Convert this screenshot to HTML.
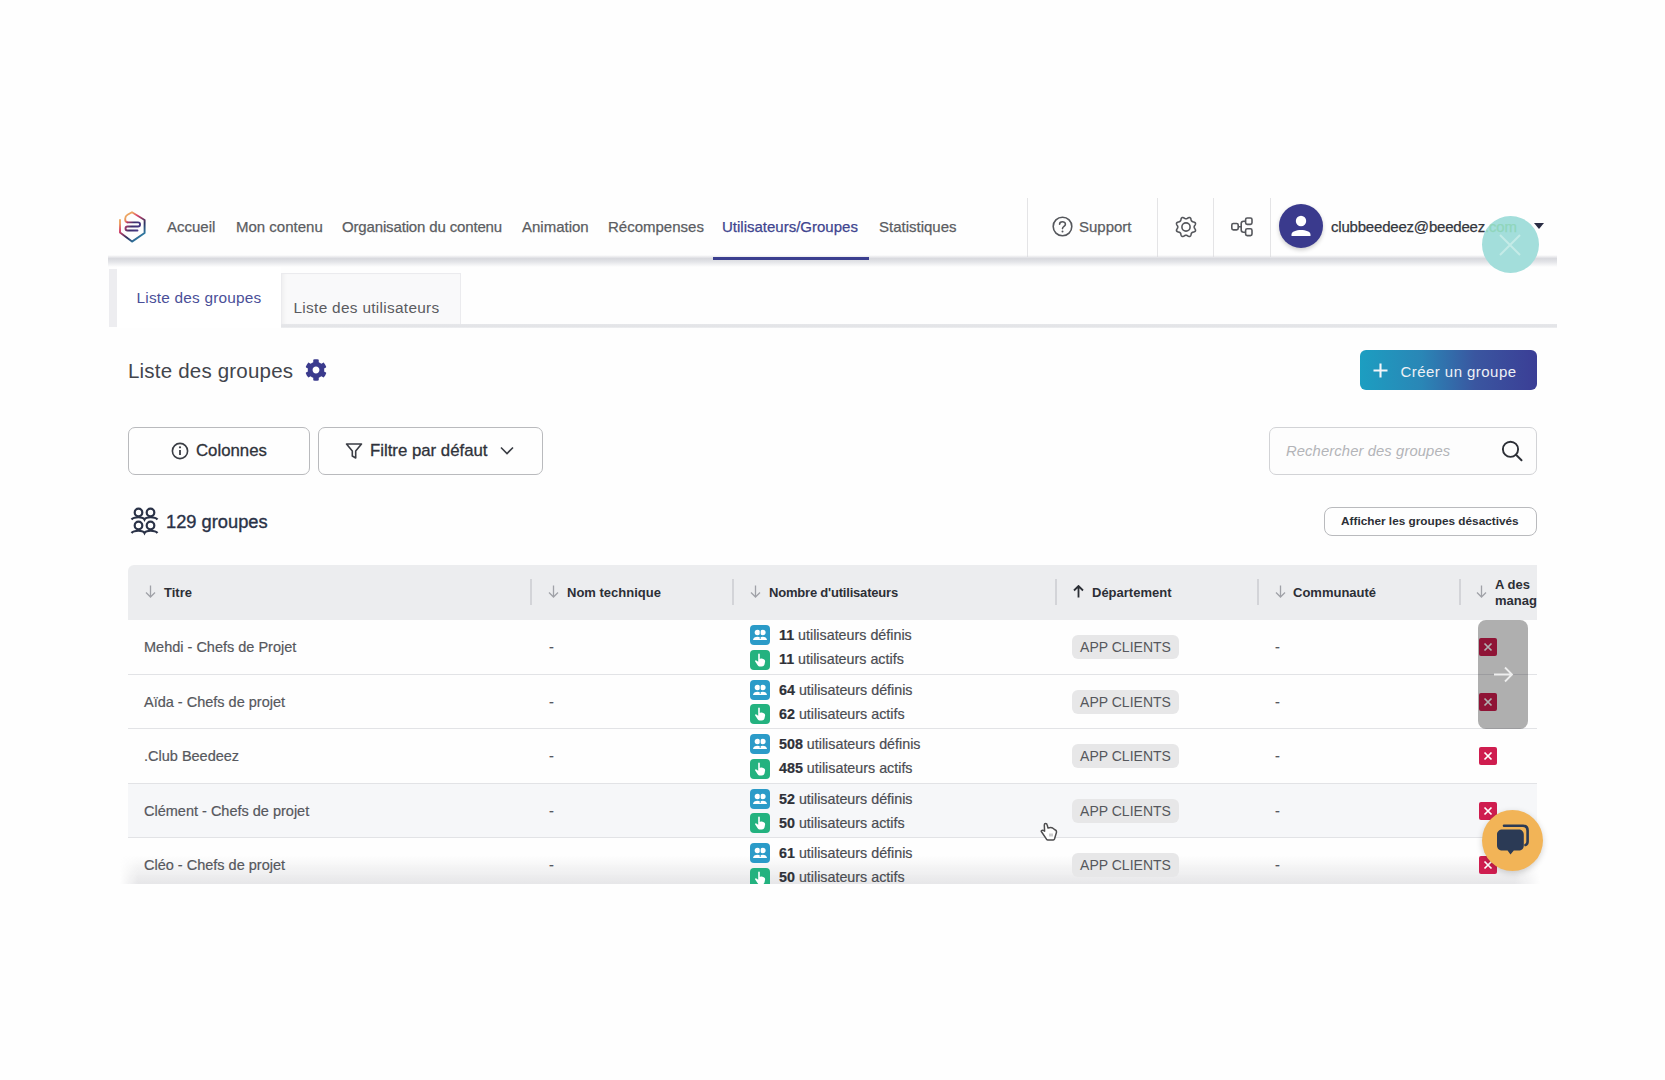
<!DOCTYPE html>
<html><head><meta charset="utf-8">
<style>
*{box-sizing:border-box;margin:0;padding:0}
html,body{width:1665px;height:1080px;overflow:hidden;background:#fefefe;font-family:"Liberation Sans",sans-serif;color:#333}
.a{position:absolute;white-space:nowrap}
.nav{font-size:15px;color:#5b5d62;top:217.5px;line-height:17px;-webkit-text-stroke:0.25px currentColor}
.sep{position:absolute;width:1px;background:#e4e4e6;top:198px;height:59px}
.hdr{position:absolute;font-size:13px;font-weight:bold;color:#2c2f36;line-height:15px}
.arr{position:absolute;color:#9a9ca3;font-size:14px}
.vsep{position:absolute;width:1.5px;background:#d3d4d8;top:579px;height:26px}
.row{position:absolute;left:128px;width:1409px;height:55px;border-top:1px solid #e2e3e6}
.t{position:absolute;font-size:14.5px;color:#56585d;line-height:16px;-webkit-text-stroke:0.2px currentColor}
.ic{position:absolute;width:20px;height:20px;border-radius:4px}
.blue{background:#2b9bc8}
.green{background:#23b27f}
.cnt{position:absolute;font-size:14.3px;color:#4a4c52;line-height:16px;-webkit-text-stroke:0.2px currentColor}
.cnt b{color:#2e3138}
.pill{position:absolute;left:1072px;width:107px;height:24px;border-radius:6px;background:#e7e7e8;color:#55575c;font-size:14px;line-height:24px;text-align:center}
.rx{position:absolute;left:1479px;width:18px;height:18px;border-radius:2px;background:#cf1d4f}
</style></head><body>

<!-- header -->
<svg class="a" style="left:112px;top:204px" width="40" height="44" viewBox="0 0 40 44">
<defs><linearGradient id="lg" gradientUnits="userSpaceOnUse" x1="8" y1="8" x2="33" y2="38"><stop offset="0" stop-color="#f0b45e"/><stop offset="0.22" stop-color="#eba060"/><stop offset="0.36" stop-color="#d8416a"/><stop offset="0.62" stop-color="#2f3260"/><stop offset="1" stop-color="#2fb8da"/></linearGradient>
<linearGradient id="lg2" gradientUnits="userSpaceOnUse" x1="13" y1="18" x2="27" y2="26"><stop offset="0" stop-color="#d83d68"/><stop offset="0.5" stop-color="#3a2f6a"/><stop offset="1" stop-color="#4a3a8a"/></linearGradient></defs>
<path d="M8 16 V28.5 L20 37.6 L32.6 29 V16 L20 8.2 L15.5 10.8 C12.5 12.5 12.2 17.8 15.5 18.4" fill="none" stroke="url(#lg)" stroke-width="1.9" stroke-linejoin="round" stroke-linecap="round"/>
<path d="M15.5 18.4 H26 A2.05 2.05 0 0 1 26 22.5 H15.5 A2 2 0 0 0 15.5 26.5 H25.5" fill="none" stroke="url(#lg2)" stroke-width="1.9" stroke-linecap="round"/>
</svg>
<div class="a nav" style="left:167px">Accueil</div>
<div class="a nav" style="left:236px">Mon contenu</div>
<div class="a nav" style="left:342px;letter-spacing:-0.15px">Organisation du contenu</div>
<div class="a nav" style="left:522px">Animation</div>
<div class="a nav" style="left:608px">Récompenses</div>
<div class="a nav" style="left:722px;color:#40458f">Utilisateurs/Groupes</div>
<div class="a nav" style="left:879px">Statistiques</div>


<div class="sep" style="left:1027px"></div>
<div class="sep" style="left:1157px"></div>
<div class="sep" style="left:1213px"></div>
<div class="sep" style="left:1270px"></div>

<svg class="a" style="left:1052px;top:216px" width="21" height="21" viewBox="0 0 21 21"><circle cx="10.5" cy="10.5" r="9.3" fill="none" stroke="#55575c" stroke-width="1.6"/><path d="M7.6 8.2 C7.6 5 13.4 5 13.4 8.2 C13.4 10.3 10.5 10.4 10.5 12.6" fill="none" stroke="#55575c" stroke-width="1.6" stroke-linecap="round"/><circle cx="10.5" cy="15.5" r="1" fill="#55575c"/></svg>
<div class="a nav" style="left:1079px">Support</div>

<svg class="a" style="left:1173.5px;top:214.5px" width="24" height="24" viewBox="0 0 24 24"><path d="M20.20 12.00 L20.23 12.43 L20.38 12.88 L20.65 13.37 L20.98 13.91 L21.29 14.49 L21.48 15.08 L21.50 15.65 L21.29 16.14 L20.89 16.53 L20.33 16.81 L19.70 17.00 L19.09 17.15 L18.55 17.31 L18.13 17.52 L17.80 17.80 L17.52 18.13 L17.31 18.55 L17.15 19.09 L17.00 19.70 L16.81 20.33 L16.53 20.89 L16.14 21.29 L15.65 21.50 L15.08 21.48 L14.49 21.29 L13.91 20.98 L13.37 20.65 L12.88 20.38 L12.43 20.23 L12.00 20.20 L11.57 20.23 L11.12 20.38 L10.63 20.65 L10.09 20.98 L9.51 21.29 L8.92 21.48 L8.35 21.50 L7.86 21.29 L7.47 20.89 L7.19 20.33 L7.00 19.70 L6.85 19.09 L6.69 18.55 L6.48 18.13 L6.20 17.80 L5.87 17.52 L5.45 17.31 L4.91 17.15 L4.30 17.00 L3.67 16.81 L3.11 16.53 L2.71 16.14 L2.50 15.65 L2.52 15.08 L2.71 14.49 L3.02 13.91 L3.35 13.37 L3.62 12.88 L3.77 12.43 L3.80 12.00 L3.77 11.57 L3.62 11.12 L3.35 10.63 L3.02 10.09 L2.71 9.51 L2.52 8.92 L2.50 8.35 L2.71 7.86 L3.11 7.47 L3.67 7.19 L4.30 7.00 L4.91 6.85 L5.45 6.69 L5.87 6.48 L6.20 6.20 L6.48 5.87 L6.69 5.45 L6.85 4.91 L7.00 4.30 L7.19 3.67 L7.47 3.11 L7.86 2.71 L8.35 2.50 L8.92 2.52 L9.51 2.71 L10.09 3.02 L10.63 3.35 L11.12 3.62 L11.57 3.77 L12.00 3.80 L12.43 3.77 L12.88 3.62 L13.37 3.35 L13.91 3.02 L14.49 2.71 L15.08 2.52 L15.65 2.50 L16.14 2.71 L16.53 3.11 L16.81 3.67 L17.00 4.30 L17.15 4.91 L17.31 5.45 L17.52 5.87 L17.80 6.20 L18.13 6.48 L18.55 6.69 L19.09 6.85 L19.70 7.00 L20.33 7.19 L20.89 7.47 L21.29 7.86 L21.50 8.35 L21.48 8.92 L21.29 9.51 L20.98 10.09 L20.65 10.63 L20.38 11.12 L20.23 11.57 L20.20 12.00Z" fill="none" stroke="#55575c" stroke-width="1.6" stroke-linejoin="round"/><circle cx="12" cy="12" r="4.1" fill="none" stroke="#55575c" stroke-width="1.6"/></svg>

<svg class="a" style="left:1230px;top:216px" width="24" height="21" viewBox="0 0 24 21"><rect x="1.8" y="7.5" width="6.4" height="6.4" rx="1.6" fill="none" stroke="#55575c" stroke-width="1.6"/><rect x="15.6" y="2" width="6.4" height="6.4" rx="1.6" fill="none" stroke="#55575c" stroke-width="1.6"/><rect x="15.6" y="12.8" width="6.4" height="6.8" rx="1.6" fill="none" stroke="#55575c" stroke-width="1.6"/><path d="M8.2 10.7 H11.2 M15.6 5.2 H13.6 C12 5.2 11.2 6 11.2 7.6 V13.8 C11.2 15.4 12 16.2 13.6 16.2 H15.6" fill="none" stroke="#55575c" stroke-width="1.6"/></svg>

<div class="a" style="left:1279px;top:204px;width:44px;height:44px;border-radius:50%;background:#3a3a8d;box-shadow:0 2px 4px rgba(0,0,0,.2)"></div>
<svg class="a" style="left:1288px;top:214px" width="26" height="24" viewBox="0 0 26 24"><circle cx="13" cy="7" r="5.2" fill="#fff"/><path d="M3.5 20.5 C3.5 14.5 22.5 14.5 22.5 20.5 L22.5 22 L3.5 22 Z" fill="#fff"/></svg>
<div class="a nav" style="left:1331px;color:#33363d;letter-spacing:-0.2px;z-index:2">clubbeedeez@beedeez<span style="color:#90d6bb">.com</span></div>
<svg class="a" style="left:1534px;top:223px" width="10" height="7" viewBox="0 0 10 7"><path d="M0 0 H10 L5 6 Z" fill="#2a2d44"/></svg>

<!-- header shadow -->
<div class="a" style="left:108px;top:254.5px;width:1449px;height:12px;background:linear-gradient(rgba(220,221,226,0),#d8d9de 30%,#e2e3e7 55%,rgba(240,240,243,0))"></div>
<div class="a" style="left:713px;top:256.5px;width:156px;height:3px;background:#3b3f8f"></div>

<!-- teal close bubble -->
<div class="a" style="left:1482px;top:216px;width:57px;height:57px;border-radius:50%;background:#a3dedb"></div>
<svg class="a" style="left:1497px;top:232px" width="26" height="26" viewBox="0 0 26 26"><path d="M3 3 L23 23 M23 3 L3 23" stroke="#c4ebe7" stroke-width="2"/></svg>

<!-- tabs -->
<div class="a" style="left:108.5px;top:269px;width:8px;height:58px;background:#ededf0"></div>
<div class="a" style="left:116.5px;top:267px;width:164px;height:61px;background:#fff"></div>
<div class="a" style="left:280.5px;top:273px;width:180px;height:51px;background:#f9f9fa;border:1px solid #ebebee;border-bottom:none;box-shadow:inset 4px 0 5px -3px rgba(0,0,0,.06)"></div>
<div class="a" style="left:280.5px;top:323.5px;width:1276.5px;height:4px;background:linear-gradient(#e6e7ea,#e3e4e7 60%,#eeeff1)"></div>
<div class="a" style="left:136.5px;top:289.3px;font-size:15.4px;color:#4a4f98;letter-spacing:0.2px">Liste des groupes</div>
<div class="a" style="left:293.5px;top:299.3px;font-size:15.4px;color:#5a5b60;letter-spacing:0.3px">Liste des utilisateurs</div>

<!-- title -->
<div class="a" style="left:128px;top:359px;font-size:20.5px;color:#42454c;letter-spacing:0.2px">Liste des groupes</div>
<svg class="a" style="left:305px;top:359px" width="22" height="22" viewBox="0 0 512 512"><path fill="#3a3a8d" d="M487.4 315.7l-42.6-24.6c4.3-23.2 4.3-47 0-70.2l42.6-24.6c4.9-2.8 7.1-8.6 5.5-14-11.1-35.6-30-67.8-54.7-94.6-3.8-4.1-10-5.1-14.8-2.3L380.8 110c-17.9-15.4-38.5-27.3-60.8-35.1V25.8c0-5.6-3.9-10.500-9.400-11.700-36.700-8.200-74.300-7.800-109.200 0-5.500 1.200-9.400 6.100-9.400 11.700V75c-22.200 7.900-42.800 19.800-60.800 35.100L88.700 85.500c-4.900-2.800-11-1.900-14.800 2.300-24.700 26.700-43.600 58.900-54.700 94.600-1.700 5.400.6 11.200 5.500 14L67.300 221c-4.300 23.200-4.300 47 0 70.200l-42.600 24.600c-4.900 2.800-7.100 8.600-5.500 14 11.100 35.600 30 67.800 54.700 94.600 3.800 4.100 10 5.100 14.800 2.300l42.600-24.600c17.900 15.400 38.500 27.300 60.800 35.100v49.200c0 5.600 3.900 10.500 9.400 11.700 36.700 8.200 74.300 7.800 109.200 0 5.500-1.200 9.400-6.100 9.400-11.700v-49.200c22.200-7.900 42.800-19.800 60.800-35.100l42.600 24.600c4.900 2.800 11 1.900 14.800-2.300 24.700-26.700 43.600-58.900 54.700-94.600 1.500-5.500-.7-11.300-5.600-14.100zM256 336c-44.100 0-80-35.900-80-80s35.900-80 80-80 80 35.900 80 80-35.900 80-80 80z"/></svg>

<!-- create button -->
<div class="a" style="left:1360px;top:350px;width:177px;height:40px;border-radius:6px;background:linear-gradient(90deg,#1c9ec1 0%,#2a86b6 35%,#3a56a0 65%,#3b3e96 100%)"></div>
<svg class="a" style="left:1373px;top:363px" width="15" height="15" viewBox="0 0 15 15"><path d="M7.5 0.5 V14.5 M0.5 7.5 H14.5" stroke="#f4f6fa" stroke-width="2.1"/></svg>
<div class="a" style="left:1400.5px;top:362.5px;font-size:15px;color:#eef1f6;letter-spacing:0.45px">Créer un groupe</div>

<!-- buttons -->
<div class="a" style="left:128px;top:427px;width:182px;height:48px;border:1.5px solid #b9babd;border-radius:7px"></div>
<svg class="a" style="left:171px;top:442px" width="18" height="18" viewBox="0 0 18 18"><circle cx="9" cy="9" r="7.6" fill="none" stroke="#3a3d44" stroke-width="1.6"/><path d="M9 8 V13" stroke="#3a3d44" stroke-width="1.8"/><circle cx="9" cy="5.3" r="1.1" fill="#3a3d44"/></svg>
<div class="a" style="left:196px;top:441px;font-size:16.8px;color:#2f323a;-webkit-text-stroke:0.3px currentColor">Colonnes</div>
<div class="a" style="left:318px;top:427px;width:225px;height:48px;border:1.5px solid #b9babd;border-radius:7px"></div>
<svg class="a" style="left:345px;top:442px" width="18" height="18" viewBox="0 0 18 18"><path d="M1.5 2 H16.5 L10.7 9 V16 L7.3 14 V9 Z" fill="none" stroke="#3a3d44" stroke-width="1.6" stroke-linejoin="round"/></svg>
<div class="a" style="left:370px;top:441px;font-size:16.8px;color:#2f323a;-webkit-text-stroke:0.3px currentColor">Filtre par défaut</div>
<svg class="a" style="left:500px;top:446px" width="14" height="10" viewBox="0 0 14 10"><path d="M1 1.5 L7 7.5 L13 1.5" fill="none" stroke="#3a3d44" stroke-width="1.6"/></svg>

<!-- search -->
<div class="a" style="left:1269px;top:427px;width:268px;height:48px;border:1.5px solid #d2d3d6;border-radius:7px;background:#fdfdfd"></div>
<div class="a" style="left:1286px;top:443px;font-size:14.8px;font-style:italic;color:#b3b4b8;letter-spacing:0.1px">Rechercher des groupes</div>
<svg class="a" style="left:1501px;top:440px" width="23" height="22" viewBox="0 0 23 22"><circle cx="9.5" cy="9.3" r="7.6" fill="none" stroke="#2c2f36" stroke-width="1.9"/><path d="M15 14.8 L20.5 20.3" stroke="#2c2f36" stroke-width="2" stroke-linecap="round"/></svg>

<!-- count -->
<svg class="a" style="left:130px;top:507px" width="29" height="29" viewBox="0 0 29 29" fill="none" stroke="#2a3247" stroke-width="2.2"><circle cx="8.5" cy="5.5" r="3.8"/><circle cx="20.5" cy="5.5" r="3.8"/><path d="M1.5 12.5 C4 9.5 13 9.5 14.5 12.5 C16 9.5 25 9.5 27.5 12.5"/><circle cx="8.5" cy="18.5" r="3.8"/><circle cx="20.5" cy="18.5" r="3.8"/><path d="M1.5 26 C4 23 13 23 14.5 26 C16 23 25 23 27.5 26"/></svg>
<div class="a" style="left:166px;top:511px;font-size:18.3px;color:#2a3247;-webkit-text-stroke:0.35px currentColor">129 groupes</div>

<div class="a" style="left:1324px;top:507px;width:213px;height:29px;border:1.5px solid #b9babd;border-radius:8px"></div>
<div class="a" style="left:1341px;top:514px;font-size:11.8px;font-weight:bold;color:#2c2f36">Afficher les groupes désactivés</div>

<!-- table header -->
<div class="a" style="left:128px;top:564.5px;width:1409px;height:55.5px;background:#ecedef;border-radius:6px 0 0 0"></div>
<div class="vsep" style="left:530px"></div>
<div class="vsep" style="left:732px"></div>
<div class="vsep" style="left:1055px"></div>
<div class="vsep" style="left:1257px"></div>
<div class="vsep" style="left:1459px"></div>
<svg class="a" style="left:145px;top:585px" width="11" height="13" viewBox="0 0 11 13"><path d="M5.5 0.5 V12 M1 7.5 L5.5 12 L10 7.5" fill="none" stroke="#a0a2a8" stroke-width="1.3"/></svg>
<div class="hdr a" style="left:164px;top:585px">Titre</div>
<svg class="a" style="left:548px;top:585px" width="11" height="13" viewBox="0 0 11 13"><path d="M5.5 0.5 V12 M1 7.5 L5.5 12 L10 7.5" fill="none" stroke="#a0a2a8" stroke-width="1.3"/></svg>
<div class="hdr a" style="left:567px;top:585px">Nom technique</div>
<svg class="a" style="left:750px;top:585px" width="11" height="13" viewBox="0 0 11 13"><path d="M5.5 0.5 V12 M1 7.5 L5.5 12 L10 7.5" fill="none" stroke="#a0a2a8" stroke-width="1.3"/></svg>
<div class="hdr a" style="left:769px;top:585px;letter-spacing:-0.2px">Nombre d'utilisateurs</div>
<svg class="a" style="left:1073px;top:585px" width="11" height="13" viewBox="0 0 11 13"><path d="M5.5 12.5 V1 M1 5.5 L5.5 1 L10 5.5" fill="none" stroke="#2c2f36" stroke-width="1.8"/></svg>
<div class="hdr a" style="left:1092px;top:585px">Département</div>
<svg class="a" style="left:1275px;top:585px" width="11" height="13" viewBox="0 0 11 13"><path d="M5.5 0.5 V12 M1 7.5 L5.5 12 L10 7.5" fill="none" stroke="#a0a2a8" stroke-width="1.3"/></svg>
<div class="hdr a" style="left:1293px;top:585px">Communauté</div>
<svg class="a" style="left:1476px;top:585px" width="11" height="13" viewBox="0 0 11 13"><path d="M5.5 0.5 V12 M1 7.5 L5.5 12 L10 7.5" fill="none" stroke="#a0a2a8" stroke-width="1.3"/></svg>
<div class="a" style="left:1495px;top:577px;width:42px;overflow:hidden;font-size:13px;font-weight:bold;color:#2c2f36;line-height:16px">A des<br>managers</div>

<!-- rows -->
<div class="a" style="left:120px;top:856px;width:1420px;height:28px;background:linear-gradient(rgba(232,232,234,0),rgba(230,230,232,1));-webkit-mask-image:linear-gradient(90deg,transparent,#000 18px,#000 1395px,transparent)"></div>
<div class="row" style="top:620px;border-top:none"></div>
<div class="a t" style="left:144px;top:639px">Mehdi - Chefs de Projet</div>
<div class="a t" style="left:549px;top:639px">-</div>
<div class="a" style="left:750px;top:625px"><svg width="20" height="20" viewBox="0 0 20 20"><rect width="20" height="20" rx="4" fill="#2b9bc8"/><circle cx="7.5" cy="7.5" r="2.8" fill="#fff"/><circle cx="12.8" cy="7.5" r="2.8" fill="#fff"/><path d="M3 15 C3 10.5 12 10.5 12 15 Z M8.5 15 C8.5 10.5 17 10.5 17 15 Z" fill="#fff"/><path d="M10.2 5 V14" stroke="#2b9bc8" stroke-width="0.9"/></svg></div>
<div class="a" style="left:750px;top:649.5px"><svg width="20" height="20" viewBox="0 0 20 20"><rect width="20" height="20" rx="4" fill="#23b27f"/><path d="M8.2 4.2 C8.2 3.2 9.8 3.2 9.8 4.2 V9 L10.8 8.6 C11.8 8.3 12.6 8.6 13.2 9 L14.2 9.6 C15 10 15.2 10.7 15.1 11.5 L14.6 14 C14.3 15.6 13.2 16.5 11.6 16.5 H10.2 C9 16.5 8.2 16 7.5 15 L5.2 11.6 C4.7 10.9 5.5 10 6.3 10.5 L8.2 11.7 Z" fill="#fff"/></svg></div>
<div class="a cnt" style="left:779px;top:627px"><b>11</b> utilisateurs définis</div>
<div class="a cnt" style="left:779px;top:651px"><b>11</b> utilisateurs actifs</div>
<div class="pill" style="top:635px">APP CLIENTS</div>
<div class="a t" style="left:1275px;top:639px">-</div>
<div class="rx" style="top:638px"><svg width="18" height="18" viewBox="0 0 18 18"><path d="M5.5 5.5 L12.5 12.5 M12.5 5.5 L5.5 12.5" stroke="#fff" stroke-width="1.7"/></svg></div>
<div class="row" style="top:673.5px;"></div>
<div class="a t" style="left:144px;top:693.5px">Aïda - Chefs de projet</div>
<div class="a t" style="left:549px;top:693.5px">-</div>
<div class="a" style="left:750px;top:679.5px"><svg width="20" height="20" viewBox="0 0 20 20"><rect width="20" height="20" rx="4" fill="#2b9bc8"/><circle cx="7.5" cy="7.5" r="2.8" fill="#fff"/><circle cx="12.8" cy="7.5" r="2.8" fill="#fff"/><path d="M3 15 C3 10.5 12 10.5 12 15 Z M8.5 15 C8.5 10.5 17 10.5 17 15 Z" fill="#fff"/><path d="M10.2 5 V14" stroke="#2b9bc8" stroke-width="0.9"/></svg></div>
<div class="a" style="left:750px;top:704.0px"><svg width="20" height="20" viewBox="0 0 20 20"><rect width="20" height="20" rx="4" fill="#23b27f"/><path d="M8.2 4.2 C8.2 3.2 9.8 3.2 9.8 4.2 V9 L10.8 8.6 C11.8 8.3 12.6 8.6 13.2 9 L14.2 9.6 C15 10 15.2 10.7 15.1 11.5 L14.6 14 C14.3 15.6 13.2 16.5 11.6 16.5 H10.2 C9 16.5 8.2 16 7.5 15 L5.2 11.6 C4.7 10.9 5.5 10 6.3 10.5 L8.2 11.7 Z" fill="#fff"/></svg></div>
<div class="a cnt" style="left:779px;top:681.5px"><b>64</b> utilisateurs définis</div>
<div class="a cnt" style="left:779px;top:705.5px"><b>62</b> utilisateurs actifs</div>
<div class="pill" style="top:689.5px">APP CLIENTS</div>
<div class="a t" style="left:1275px;top:693.5px">-</div>
<div class="rx" style="top:692.5px"><svg width="18" height="18" viewBox="0 0 18 18"><path d="M5.5 5.5 L12.5 12.5 M12.5 5.5 L5.5 12.5" stroke="#fff" stroke-width="1.7"/></svg></div>
<div class="row" style="top:728px;"></div>
<div class="a t" style="left:144px;top:748px">.Club Beedeez</div>
<div class="a t" style="left:549px;top:748px">-</div>
<div class="a" style="left:750px;top:734px"><svg width="20" height="20" viewBox="0 0 20 20"><rect width="20" height="20" rx="4" fill="#2b9bc8"/><circle cx="7.5" cy="7.5" r="2.8" fill="#fff"/><circle cx="12.8" cy="7.5" r="2.8" fill="#fff"/><path d="M3 15 C3 10.5 12 10.5 12 15 Z M8.5 15 C8.5 10.5 17 10.5 17 15 Z" fill="#fff"/><path d="M10.2 5 V14" stroke="#2b9bc8" stroke-width="0.9"/></svg></div>
<div class="a" style="left:750px;top:758.5px"><svg width="20" height="20" viewBox="0 0 20 20"><rect width="20" height="20" rx="4" fill="#23b27f"/><path d="M8.2 4.2 C8.2 3.2 9.8 3.2 9.8 4.2 V9 L10.8 8.6 C11.8 8.3 12.6 8.6 13.2 9 L14.2 9.6 C15 10 15.2 10.7 15.1 11.5 L14.6 14 C14.3 15.6 13.2 16.5 11.6 16.5 H10.2 C9 16.5 8.2 16 7.5 15 L5.2 11.6 C4.7 10.9 5.5 10 6.3 10.5 L8.2 11.7 Z" fill="#fff"/></svg></div>
<div class="a cnt" style="left:779px;top:736px"><b>508</b> utilisateurs définis</div>
<div class="a cnt" style="left:779px;top:760px"><b>485</b> utilisateurs actifs</div>
<div class="pill" style="top:744px">APP CLIENTS</div>
<div class="a t" style="left:1275px;top:748px">-</div>
<div class="rx" style="top:747px"><svg width="18" height="18" viewBox="0 0 18 18"><path d="M5.5 5.5 L12.5 12.5 M12.5 5.5 L5.5 12.5" stroke="#fff" stroke-width="1.7"/></svg></div>
<div class="row" style="top:782.5px;background:#f6f7f9;"></div>
<div class="a t" style="left:144px;top:802.5px">Clément - Chefs de projet</div>
<div class="a t" style="left:549px;top:802.5px">-</div>
<div class="a" style="left:750px;top:788.5px"><svg width="20" height="20" viewBox="0 0 20 20"><rect width="20" height="20" rx="4" fill="#2b9bc8"/><circle cx="7.5" cy="7.5" r="2.8" fill="#fff"/><circle cx="12.8" cy="7.5" r="2.8" fill="#fff"/><path d="M3 15 C3 10.5 12 10.5 12 15 Z M8.5 15 C8.5 10.5 17 10.5 17 15 Z" fill="#fff"/><path d="M10.2 5 V14" stroke="#2b9bc8" stroke-width="0.9"/></svg></div>
<div class="a" style="left:750px;top:813.0px"><svg width="20" height="20" viewBox="0 0 20 20"><rect width="20" height="20" rx="4" fill="#23b27f"/><path d="M8.2 4.2 C8.2 3.2 9.8 3.2 9.8 4.2 V9 L10.8 8.6 C11.8 8.3 12.6 8.6 13.2 9 L14.2 9.6 C15 10 15.2 10.7 15.1 11.5 L14.6 14 C14.3 15.6 13.2 16.5 11.6 16.5 H10.2 C9 16.5 8.2 16 7.5 15 L5.2 11.6 C4.7 10.9 5.5 10 6.3 10.5 L8.2 11.7 Z" fill="#fff"/></svg></div>
<div class="a cnt" style="left:779px;top:790.5px"><b>52</b> utilisateurs définis</div>
<div class="a cnt" style="left:779px;top:814.5px"><b>50</b> utilisateurs actifs</div>
<div class="pill" style="top:798.5px">APP CLIENTS</div>
<div class="a t" style="left:1275px;top:802.5px">-</div>
<div class="rx" style="top:801.5px"><svg width="18" height="18" viewBox="0 0 18 18"><path d="M5.5 5.5 L12.5 12.5 M12.5 5.5 L5.5 12.5" stroke="#fff" stroke-width="1.7"/></svg></div>
<div class="row" style="top:837px;"></div>
<div class="a t" style="left:144px;top:857px">Cléo - Chefs de projet</div>
<div class="a t" style="left:549px;top:857px">-</div>
<div class="a" style="left:750px;top:843px"><svg width="20" height="20" viewBox="0 0 20 20"><rect width="20" height="20" rx="4" fill="#2b9bc8"/><circle cx="7.5" cy="7.5" r="2.8" fill="#fff"/><circle cx="12.8" cy="7.5" r="2.8" fill="#fff"/><path d="M3 15 C3 10.5 12 10.5 12 15 Z M8.5 15 C8.5 10.5 17 10.5 17 15 Z" fill="#fff"/><path d="M10.2 5 V14" stroke="#2b9bc8" stroke-width="0.9"/></svg></div>
<div class="a" style="left:750px;top:867.5px"><svg width="20" height="20" viewBox="0 0 20 20"><rect width="20" height="20" rx="4" fill="#23b27f"/><path d="M8.2 4.2 C8.2 3.2 9.8 3.2 9.8 4.2 V9 L10.8 8.6 C11.8 8.3 12.6 8.6 13.2 9 L14.2 9.6 C15 10 15.2 10.7 15.1 11.5 L14.6 14 C14.3 15.6 13.2 16.5 11.6 16.5 H10.2 C9 16.5 8.2 16 7.5 15 L5.2 11.6 C4.7 10.9 5.5 10 6.3 10.5 L8.2 11.7 Z" fill="#fff"/></svg></div>
<div class="a cnt" style="left:779px;top:845px"><b>61</b> utilisateurs définis</div>
<div class="a cnt" style="left:779px;top:869px"><b>50</b> utilisateurs actifs</div>
<div class="pill" style="top:853px">APP CLIENTS</div>
<div class="a t" style="left:1275px;top:857px">-</div>
<div class="rx" style="top:856px"><svg width="18" height="18" viewBox="0 0 18 18"><path d="M5.5 5.5 L12.5 12.5 M12.5 5.5 L5.5 12.5" stroke="#fff" stroke-width="1.7"/></svg></div>
<div class="a" style="left:1478px;top:620px;width:50px;height:109px;border-radius:8px;background:rgba(0,0,0,.31)"></div>
<svg class="a" style="left:1493px;top:666px" width="21" height="17" viewBox="0 0 21 17"><path d="M1 8.5 H19 M12 1.5 L19 8.5 L12 15.5" fill="none" stroke="#eee" stroke-width="1.8"/></svg>

<div class="a" style="left:0;top:884px;width:1665px;height:196px;background:#fefefe"></div>
<div class="a" style="left:1482px;top:810px;width:61px;height:61px;border-radius:50%;background:#f2b457;box-shadow:0 2px 6px rgba(0,0,0,.18)"></div>
<svg class="a" style="left:1495px;top:823px" width="36" height="34" viewBox="0 0 36 34"><path d="M9 2.8 H28 C31 2.8 32.6 4.6 32.6 7.5 V18.5 C32.6 20.5 31.8 21.6 30.5 22" fill="none" stroke="#2b3a55" stroke-width="2.6" stroke-linecap="round"/><path d="M7.5 6.5 H23.5 C26.8 6.5 28.8 8.5 28.8 11.8 V22.3 C28.8 25.6 26.8 27.6 23.5 27.6 H18.8 L15.5 31.5 L12.6 27.6 H7.5 C4.2 27.6 2 25.6 2 22.3 V11.8 C2 8.5 4.2 6.5 7.5 6.5 Z" fill="#2b3a55"/></svg>
<svg class="a" style="left:1040px;top:822px" width="19" height="20" viewBox="0 0 19 20"><path d="M5.6 1.4 C4.6 1.4 4.3 2.2 4.3 3 L4.6 9.2 L3.2 8.4 C2 7.8 0.8 8.8 1.5 9.8 L6.5 17.2 C6.9 17.7 7.3 17.9 7.8 17.9 H13.3 C13.9 17.9 14.3 17.5 14.5 17 L16.4 10.6 C16.7 9.2 16.2 8.2 15 7.8 L12.6 6 C11.6 5.5 9.6 5.6 8 6.1 L7.2 3 C7 2 6.4 1.4 5.6 1.4 Z" fill="#fff" stroke="#4d4d4f" stroke-width="1.5" stroke-linejoin="round"/><path d="M10 11.5 V14.5 M12 11.5 V14.5" stroke="#9a9a9c" stroke-width="1"/></svg>

</body></html>
